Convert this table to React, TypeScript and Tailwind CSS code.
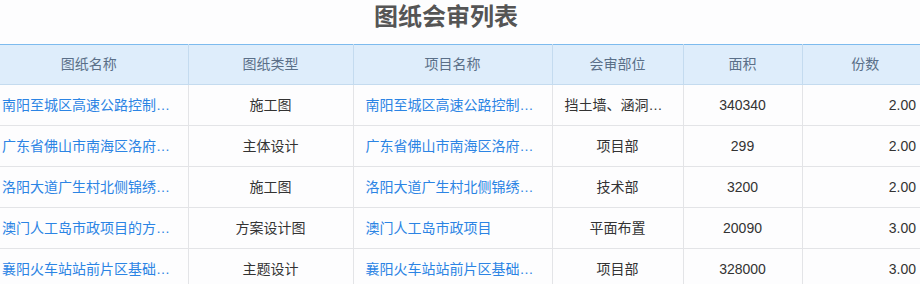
import React from 'react';

interface DrawingRow {
    name: string;
    type: string;
    project: string;
    part: string;
    area: string;
    copies: string;
}

const rows: DrawingRow[] = [
    { name: '南阳至城区高速公路控制性工程施工图', type: '施工图', project: '南阳至城区高速公路控制性工程', part: '挡土墙、涵洞、桥梁', area: '340340', copies: '2.00' },
    { name: '广东省佛山市南海区洛府村改造主体设计', type: '主体设计', project: '广东省佛山市南海区洛府村改造', part: '项目部', area: '299', copies: '2.00' },
    { name: '洛阳大道广生村北侧锦绣苑施工图', type: '施工图', project: '洛阳大道广生村北侧锦绣苑项目', part: '技术部', area: '3200', copies: '2.00' },
    { name: '澳门人工岛市政项目的方案设计图', type: '方案设计图', project: '澳门人工岛市政项目', part: '平面布置', area: '20090', copies: '3.00' },
    { name: '襄阳火车站站前片区基础设施主题设计', type: '主题设计', project: '襄阳火车站站前片区基础设施', part: '项目部', area: '328000', copies: '3.00' },
];

const headers = ['图纸名称', '图纸类型', '项目名称', '会审部位', '面积', '份数'];
const widths = ['w-[198px]', 'w-[165px]', 'w-[199px]', 'w-[131px]', 'w-[119px]', 'w-[126px]'];

export default function App() {
    return (
        <div
            className="w-[920px] h-[284px] overflow-hidden bg-[#fdfdfe]"
            style={{ fontFamily: '"Liberation Sans", "Noto Sans CJK SC", sans-serif' }}
        >
            <h1 className="h-[44px] pr-[28px] pt-[1px] text-center text-[24px] leading-[32px] font-bold text-[#555]">
                图纸会审列表
            </h1>
            <div className="-ml-[10px] w-[938px]">
                <table className="table-fixed border-collapse w-full text-[14px]">
                    <colgroup>
                        {widths.map((w, i) => (
                            <col key={i} className={w} />
                        ))}
                    </colgroup>
                    <thead>
                        <tr className="h-[40px] bg-[#deedfb] border-t border-[#7dbbee]">
                            {headers.map((h, i) => (
                                <th
                                    key={h}
                                    className={`font-normal text-[#5a6f88] text-center border-b border-[#c4dbef] ${i > 0 ? 'border-l' : ''}`}
                                >
                                    {h}
                                </th>
                            ))}
                        </tr>
                    </thead>
                    <tbody>
                        {rows.map((r, idx) => (
                            <tr key={idx} className="h-[41px] border-b border-[#e3e4e7]">
                                <td className="px-[12px] text-[#2b84e4] truncate">{r.name}</td>
                                <td className="px-[12px] text-[#333] text-center truncate border-l border-[#e3e4e7]">{r.type}</td>
                                <td className="px-[12px] text-[#2b84e4] truncate border-l border-[#e3e4e7]">{r.project}</td>
                                <td className="px-[12px] text-[#333] text-center truncate border-l border-[#e3e4e7]">{r.part}</td>
                                <td className="px-[12px] text-[#333] text-center border-l border-[#e3e4e7]">{r.area}</td>
                                <td className="px-[12px] text-[#333] text-right border-l border-[#e3e4e7]">{r.copies}</td>
                            </tr>
                        ))}
                    </tbody>
                </table>
            </div>
        </div>
    );
}
